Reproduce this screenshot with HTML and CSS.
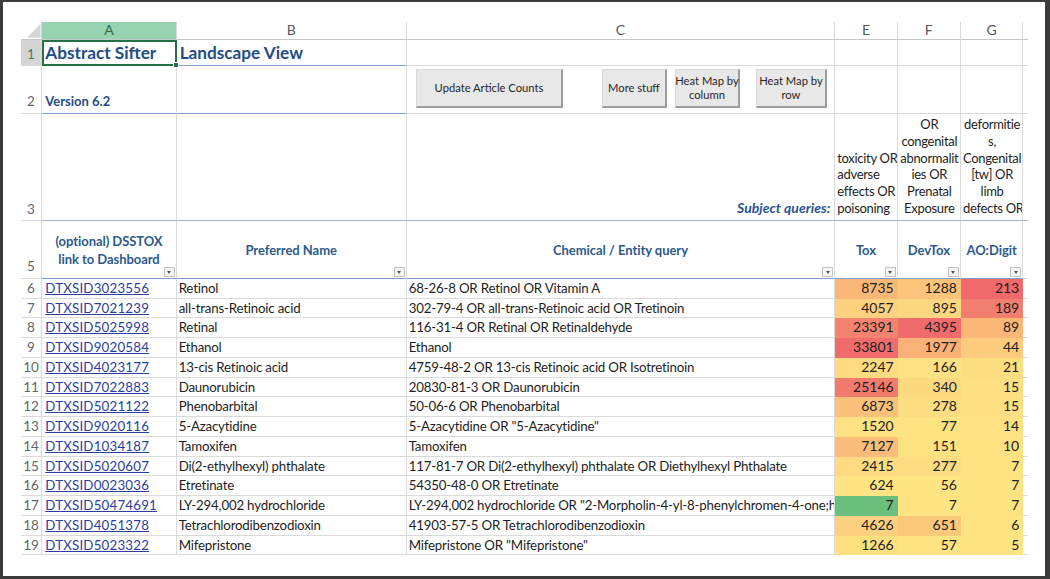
FILE: index.html
```html
<!DOCTYPE html>
<html lang="en">
<head>
<meta charset="utf-8">
<title>Abstract Sifter</title>
<link rel="stylesheet" href="styles.css">
</head>
<body>
<div class="frame">
  <div class="sheet">
    <!-- column headers -->
    <div class="corner"><svg width="21" height="17" viewBox="0 0 21 17"><polygon points="6,16 20,16 20,1.5" fill="#d6d6d6"/></svg></div>
    <div class="ch sel">A</div>
    <div class="ch">B</div>
    <div class="ch">C</div>
    <div class="ch">E</div>
    <div class="ch">F</div>
    <div class="ch">G</div>
    <div class="ch h"></div>

    <!-- row 1 -->
    <div class="rh top sel">1</div>
    <div class="title active blue-b">Abstract Sifter</div>
    <div class="title blue-b">Landscape View</div>
    <div></div><div></div><div></div><div></div><div class="h"></div>

    <!-- row 2 -->
    <div class="rh top">2</div>
    <div class="version blue-b">Version 6.2</div>
    <div class="blue-b"></div>
    <div class="btns">
      <div class="btn b1">Update Article Counts</div>
      <div class="btn b2">More stuff</div>
      <div class="btn b3">Heat Map by<br>column</div>
      <div class="btn b4">Heat Map by<br>row</div>
    </div>
    <div></div><div></div><div></div><div class="h"></div>

    <!-- row 3 -->
    <div class="rh top">3</div>
    <div class="r3"></div>
    <div class="r3"></div>
    <div class="r3 subj">Subject queries:</div>
    <div class="r3 q"><div class="ql">toxicity OR<br>adverse<br>effects OR<br>poisoning</div></div>
    <div class="r3 q"><div class="qc">pregnancy<br>OR<br>congenital<br>abnormalit<br>ies OR<br>Prenatal<br>Exposure</div></div>
    <div class="r3 q"><div class="qc">syndactyly<br>deformitie<br>s,<br>Congenital<br>[tw] OR<br>limb<br>defects OR</div></div>
    <div class="r3 h"></div>

    <!-- row 5 : table header -->
    <div class="rh top">5</div>
    <div class="th">(optional) DSSTOX<br>link to Dashboard<span class="dd"></span></div>
    <div class="th">Preferred Name<span class="dd"></span></div>
    <div class="th">Chemical / Entity query<span class="dd"></span></div>
    <div class="th">Tox<span class="dd"></span></div>
    <div class="th">DevTox<span class="dd"></span></div>
    <div class="th">AO:Digit<span class="dd"></span></div>
    <div class="th h"></div>

    <!-- data rows -->
    <div class="rh">6</div><div class="lk">DTXSID3023556</div><div>Retinol</div><div>68-26-8 OR Retinol OR Vitamin A</div>
    <div class="n" style="background:#f9b877">8735</div><div class="n" style="background:#fcc47b">1288</div><div class="n" style="background:#f0696b">213</div><div class="h"></div>

    <div class="rh">7</div><div class="lk">DTXSID7021239</div><div>all-trans-Retinoic acid</div><div>302-79-4 OR all-trans-Retinoic acid OR Tretinoin</div>
    <div class="n" style="background:#fdd27f">4057</div><div class="n" style="background:#fdd680">895</div><div class="n" style="background:#f27e6f">189</div><div class="h"></div>

    <div class="rh">8</div><div class="lk">DTXSID5025998</div><div>Retinal</div><div>116-31-4 OR Retinal OR Retinaldehyde</div>
    <div class="n" style="background:#f4836f">23391</div><div class="n" style="background:#f06b6c">4395</div><div class="n" style="background:#fab776">89</div><div class="h"></div>

    <div class="rh">9</div><div class="lk">DTXSID9020584</div><div>Ethanol</div><div>Ethanol</div>
    <div class="n" style="background:#ef6b6c">33801</div><div class="n" style="background:#fab177">1977</div><div class="n" style="background:#fdcb7d">44</div><div class="h"></div>

    <div class="rh">10</div><div class="lk">DTXSID4023177</div><div>13-cis Retinoic acid</div><div>4759-48-2 OR 13-cis Retinoic acid OR Isotretinoin</div>
    <div class="n" style="background:#fedb81">2247</div><div class="n" style="background:#fee182">166</div><div class="n" style="background:#fedd81">21</div><div class="h"></div>

    <div class="rh">11</div><div class="lk">DTXSID7022883</div><div>Daunorubicin</div><div>20830-81-3 OR Daunorubicin</div>
    <div class="n" style="background:#f27b6e">25146</div><div class="n" style="background:#fdd980">340</div><div class="n" style="background:#fee082">15</div><div class="h"></div>

    <div class="rh">12</div><div class="lk">DTXSID5021122</div><div>Phenobarbital</div><div>50-06-6 OR Phenobarbital</div>
    <div class="n" style="background:#fbc17a">6873</div><div class="n" style="background:#fedc81">278</div><div class="n" style="background:#fee082">15</div><div class="h"></div>

    <div class="rh">13</div><div class="lk">DTXSID9020116</div><div>5-Azacytidine</div><div>5-Azacytidine OR "5-Azacytidine"</div>
    <div class="n" style="background:#fee182">1520</div><div class="n" style="background:#fee383">77</div><div class="n" style="background:#fee182">14</div><div class="h"></div>

    <div class="rh">14</div><div class="lk">DTXSID1034187</div><div>Tamoxifen</div><div>Tamoxifen</div>
    <div class="n" style="background:#fbbd79">7127</div><div class="n" style="background:#fee282">151</div><div class="n" style="background:#fee282">10</div><div class="h"></div>

    <div class="rh">15</div><div class="lk">DTXSID5020607</div><div>Di(2-ethylhexyl) phthalate</div><div>117-81-7 OR Di(2-ethylhexyl) phthalate OR Diethylhexyl Phthalate</div>
    <div class="n" style="background:#fedb81">2415</div><div class="n" style="background:#fedc81">277</div><div class="n" style="background:#fee383">7</div><div class="h"></div>

    <div class="rh">16</div><div class="lk">DTXSID0023036</div><div>Etretinate</div><div>54350-48-0 OR Etretinate</div>
    <div class="n" style="background:#fee483">624</div><div class="n" style="background:#fee483">56</div><div class="n" style="background:#fee383">7</div><div class="h"></div>

    <div class="rh">17</div><div class="lk">DTXSID50474691</div><div>LY-294,002 hydrochloride</div><div>LY-294,002 hydrochloride OR "2-Morpholin-4-yl-8-phenylchromen-4-one;hydrochloride"</div>
    <div class="n" style="background:#69bf7b">7</div><div class="n" style="background:#fee483">7</div><div class="n" style="background:#fee383">7</div><div class="h"></div>

    <div class="rh">18</div><div class="lk">DTXSID4051378</div><div>Tetrachlorodibenzodioxin</div><div>41903-57-5 OR Tetrachlorodibenzodioxin</div>
    <div class="n" style="background:#fdd17f">4626</div><div class="n" style="background:#fcc97c">651</div><div class="n" style="background:#fee483">6</div><div class="h"></div>

    <div class="rh">19</div><div class="lk">DTXSID5023322</div><div>Mifepristone</div><div>Mifepristone OR "Mifepristone"</div>
    <div class="n" style="background:#fee081">1266</div><div class="n" style="background:#fee483">57</div><div class="n" style="background:#fee584">5</div><div class="h"></div>
  </div>
</div>
</body>
</html>
```
FILE: styles.css
```css
html, body {
  margin: 0;
  padding: 0;
  background: #ffffff;
}

.frame {
  width: 1050px;
  height: 579px;
  box-sizing: border-box;
  border-style: solid;
  border-color: #3b3b3b;
  border-width: 2px 5px 3px 3px;
  padding: 20.4px 0 0 17.7px;
  background: #ffffff;
  overflow: hidden;
  font-family: Lato, "Liberation Sans", sans-serif;
}

.sheet {
  display: grid;
  grid-template-columns: 21.6px 134.4px 230px 428.6px 62.4px 63.3px 62.3px 5px;
  grid-template-rows: 17.6px 26.4px 47.6px 107.4px 57.6px repeat(14, 19.75px);
  font-size: 13.3px;
  letter-spacing: -0.2px;
  line-height: 16.7px;
  color: #1e1e1e;
}

.sheet > div {
  box-sizing: border-box;
  min-width: 0;
  border-right: 1px solid #dadada;
  border-bottom: 1px solid #dadada;
  overflow: hidden;
  white-space: nowrap;
  display: flex;
  align-items: center;
  padding: 0 2px;
}

.sheet > .h {
  border-right: none;
  padding: 0;
}

/* header row */
.sheet > .corner {
  padding: 0;
  align-items: flex-start;
  border-bottom-color: #c8c8c8;
}

.sheet > .ch {
  justify-content: center;
  color: #595959;
  font-size: 14px;
  letter-spacing: 0;
  border-bottom-color: #c8c8c8;
}

.sheet > .ch.sel {
  background: #95d3b1;
  color: #2f6c4a;
}

/* row headers */
.sheet > .rh {
  justify-content: center;
  color: #666666;
  font-size: 13.5px;
  letter-spacing: 0;
  padding: 0;
}

.sheet > .rh.top {
  align-items: flex-end;
  padding-bottom: 3px;
}

.sheet > .rh.sel {
  background: #d5d5d5;
  color: #4b7a5b;
}

/* row 1 / 2 */
.sheet > .title {
  font-size: 17.2px;
  letter-spacing: 0;
  line-height: 20px;
  font-weight: 700;
  color: #1f4d87;
  align-items: flex-end;
  padding: 0 0 2px 3px;
}

.sheet > .version {
  font-size: 13px;
  letter-spacing: 0;
  font-weight: 700;
  color: #1f4d87;
  align-items: flex-end;
  padding: 0 0 3px 3px;
}

.sheet > .blue-b {
  border-bottom-color: #86a2d3;
}

.sheet > .active {
  position: relative;
  overflow: visible;
  z-index: 2;
}

.sheet > .active::after {
  content: "";
  position: absolute;
  left: 0;
  top: 0;
  right: -1px;
  bottom: -1px;
  border: 2px solid #217346;
}

.sheet > .active::before {
  content: "";
  position: absolute;
  right: -3px;
  bottom: -3px;
  width: 4px;
  height: 4px;
  background: #217346;
  border: 1px solid #ffffff;
  z-index: 3;
}

/* buttons */
.sheet > .btns {
  align-items: flex-start;
  padding: 3px 0 0 9.3px;
}

.btn {
  box-sizing: border-box;
  flex: none;
  height: 39px;
  display: flex;
  align-items: center;
  justify-content: center;
  text-align: center;
  white-space: nowrap;
  font-size: 11.2px;
  letter-spacing: 0;
  line-height: 14.6px;
  color: #262626;
  background: #e8e8e8;
  border-top: 1px solid #d8d8d8;
  border-left: 1px solid #d8d8d8;
  border-right: 2px solid #9d9d9d;
  border-bottom: 2px solid #9d9d9d;
}

.b1 { width: 147px; }
.b2 { width: 65px; margin-left: 39px; }
.b3 { width: 65px; margin-left: 8px; }
.b4 { width: 71px; margin-left: 16px; }

/* row 3 */
.sheet > .r3 {
  border-bottom-color: #a3b6da;
}

.sheet > .subj {
  justify-content: flex-end;
  align-items: flex-end;
  padding: 0 4px 4px 0;
  font-size: 14px;
  letter-spacing: 0;
  font-weight: 700;
  font-style: italic;
  color: #2a5596;
}

.sheet > .q {
  flex-direction: column;
  justify-content: flex-end;
  align-items: stretch;
  padding: 0 1px 4px 2px;
  font-size: 13px;
  letter-spacing: -0.3px;
}

.ql { text-align: left; }
.qc { text-align: center; }

/* row 5 table header */
.sheet > .th {
  position: relative;
  justify-content: center;
  text-align: center;
  white-space: normal;
  font-size: 13px;
  letter-spacing: -0.05px;
  font-weight: 700;
  line-height: 18px;
  color: #2c5a8e;
  border-bottom-color: #7e9bd0;
}

.sheet > .th.h {
  border-bottom-color: #dadada;
}

.dd {
  position: absolute;
  right: 1px;
  bottom: 1px;
  width: 11px;
  height: 10px;
  box-sizing: border-box;
  border: 1px solid #c4c4c4;
  background: #f5f5f5;
}

.dd::after {
  content: "";
  position: absolute;
  left: 2.5px;
  top: 3px;
  border-left: 2.5px solid transparent;
  border-right: 2.5px solid transparent;
  border-top: 3px solid #555555;
}

/* data */
.sheet > .lk {
  color: #2b3e9e;
  text-decoration: underline;
  letter-spacing: 0.2px;
  padding-left: 3px;
}

.sheet > .n {
  justify-content: flex-end;
  padding-right: 3px;
  font-size: 14px;
  letter-spacing: 0;
  border-color: transparent;
}
```
